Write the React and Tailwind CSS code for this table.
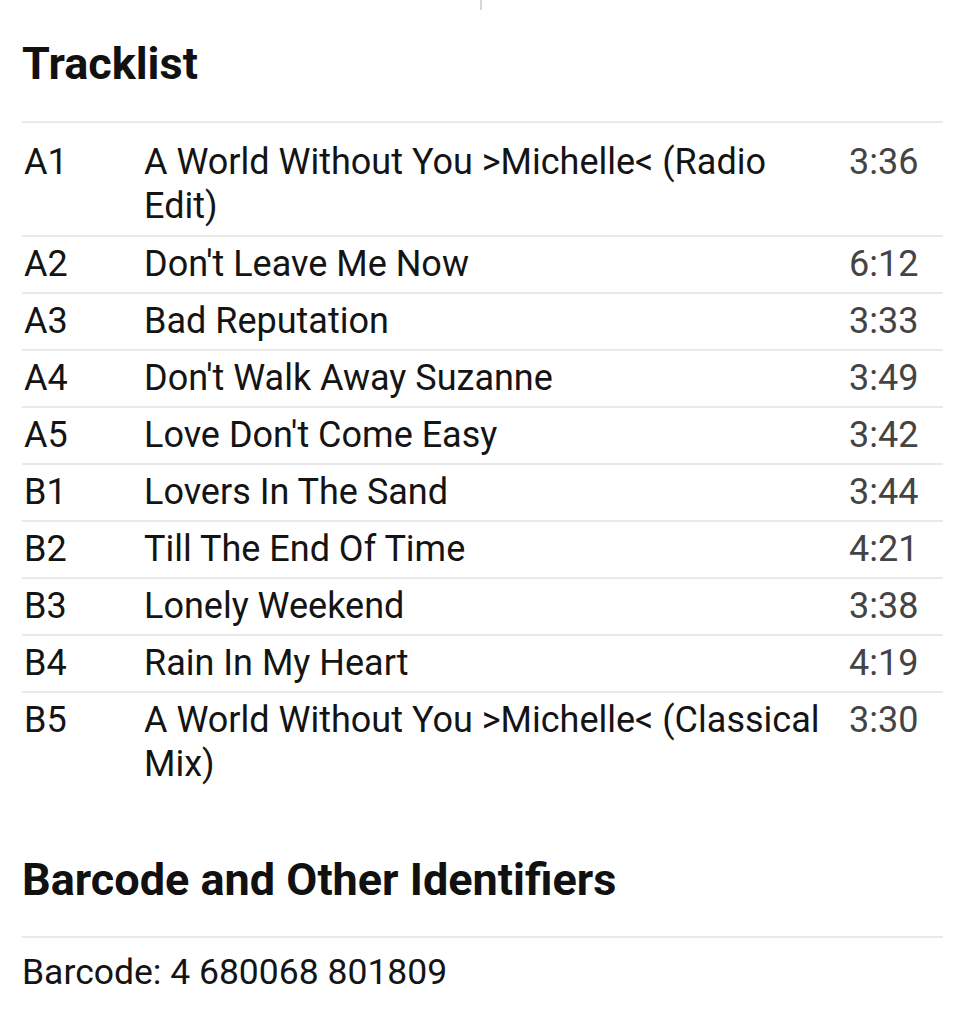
import React from "react";

const tracks = [
  ["A1", "A World Without You >Michelle< (Radio Edit)", "3:36"],
  ["A2", "Don't Leave Me Now", "6:12"],
  ["A3", "Bad Reputation", "3:33"],
  ["A4", "Don't Walk Away Suzanne", "3:49"],
  ["A5", "Love Don't Come Easy", "3:42"],
  ["B1", "Lovers In The Sand", "3:44"],
  ["B2", "Till The End Of Time", "4:21"],
  ["B3", "Lonely Weekend", "3:38"],
  ["B4", "Rain In My Heart", "4:19"],
  ["B5", "A World Without You >Michelle< (Classical Mix)", "3:30"],
];

export default function App() {
  return (
    <div
      className="relative min-h-[1024px] bg-white text-[#141414]"
      style={{ fontFamily: "Roboto, 'Noto Sans', sans-serif" }}
    >
      <div className="absolute left-[480px] top-0 h-[10px] w-[2px] bg-[#d6d6d6]" />
      <div className="pl-[22px] pr-[20px] pt-[37px]">
        <h2 className="text-[45px] font-bold leading-[54px] text-[#111]">Tracklist</h2>
        <div className="mt-[30px] border-t-2 border-[#e9e9e9] pt-[11px]">
          {tracks.map(([pos, title, dur], i) => (
            <div
              key={pos}
              className={
                i === 0
                  ? "grid grid-cols-[122px_1fr_94px] pt-[6px] pb-[7px] text-[36px] leading-[44px]"
                  : "grid grid-cols-[122px_1fr_94px] border-t-2 border-[#e9e9e9] pt-[5px] pb-[6px] text-[36px] leading-[44px]"
              }
            >
              <div className="pl-[2px]">{pos}</div>
              <div className="pr-[18px]">{title}</div>
              <div className="text-[#444]">{dur}</div>
            </div>
          ))}
        </div>
        <h2 className="mt-[61px] text-[45px] font-bold leading-[54px] text-[#111]">
          Barcode and Other Identifiers
        </h2>
        <div className="mt-[29px] border-t-2 border-[#e9e9e9] pt-[14px] text-[35.5px] leading-[40px]">
          Barcode: 4 680068 801809
        </div>
      </div>
    </div>
  );
}
